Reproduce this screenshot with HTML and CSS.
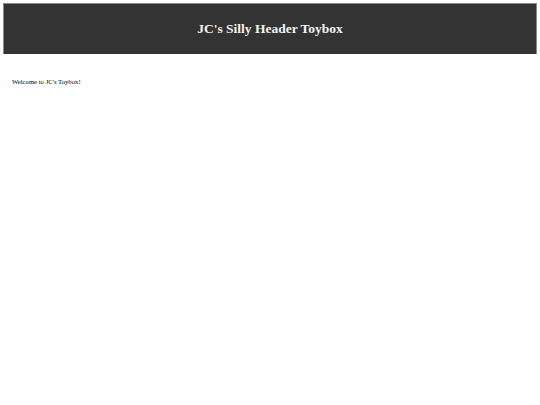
FILE: index.html
```html
<!DOCTYPE html>
<html>
<head>
<meta charset="utf-8">
<title>JC's Silly Header Toybox</title>
<link rel="stylesheet" href="styles.css">
</head>
<body>
<header class="site-header">
  <h1 class="site-title">JC's Silly Header Toybox</h1>
</header>
<main class="content">
  <p class="welcome">Welcome to JC's Toybox!</p>
</main>
</body>
</html>
```
FILE: styles.css
```css
html, body {
  margin: 0;
  padding: 0;
  background: #ffffff;
}

body {
  padding: 3px;
  font-family: "Liberation Serif", "Times New Roman", serif;
  color: #000;
}

.site-header {
  box-sizing: border-box;
  height: 51px;
  background: #333333;
  border: 1px solid #8a8a8a;
  border-bottom: none;
  display: flex;
  align-items: center;
  justify-content: center;
}

.site-title {
  margin: 0;
  font-size: 13.5px;
  font-weight: bold;
  color: #f2f2f2;
}

.content {
  padding: 24px 9px;
}

.welcome {
  margin: 0;
  font-size: 6.7px;
}
```
